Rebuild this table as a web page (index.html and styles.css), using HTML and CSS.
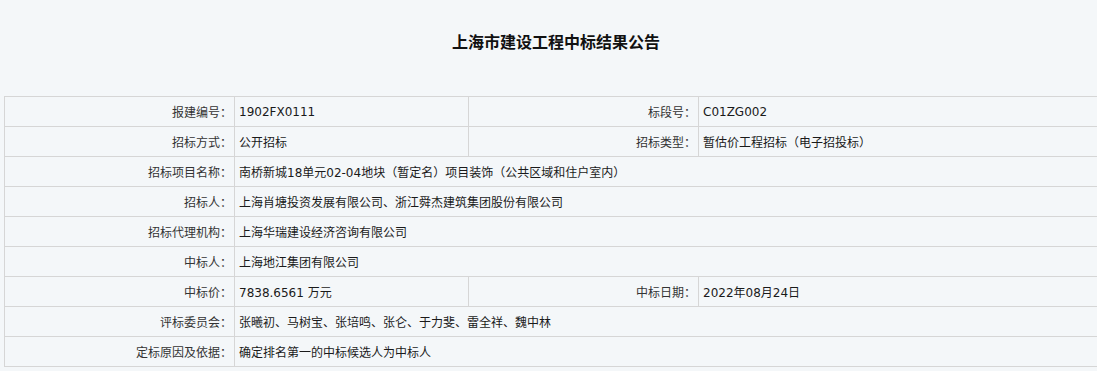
FILE: index.html
```html
<!DOCTYPE html>
<html lang="zh-CN">
<head>
<meta charset="utf-8">
<title>上海市建设工程中标结果公告</title>
<link rel="stylesheet" href="styles.css">
</head>
<body>
<div class="page">
  <h1 class="title">上海市建设工程中标结果公告</h1>
  <table class="info">
    <colgroup>
      <col class="c-label">
      <col class="c-value">
      <col class="c-label">
      <col class="c-value-wide">
    </colgroup>
    <tr>
      <th>报建编号：</th><td>1902FX0111</td>
      <th>标段号：</th><td>C01ZG002</td>
    </tr>
    <tr>
      <th>招标方式：</th><td>公开招标</td>
      <th>招标类型：</th><td>暂估价工程招标（电子招投标）</td>
    </tr>
    <tr>
      <th>招标项目名称：</th><td colspan="3">南桥新城18单元02-04地块（暂定名）项目装饰（公共区域和住户室内）</td>
    </tr>
    <tr>
      <th>招标人：</th><td colspan="3">上海肖塘投资发展有限公司、浙江舜杰建筑集团股份有限公司</td>
    </tr>
    <tr>
      <th>招标代理机构：</th><td colspan="3">上海华瑞建设经济咨询有限公司</td>
    </tr>
    <tr>
      <th>中标人：</th><td colspan="3">上海地江集团有限公司</td>
    </tr>
    <tr>
      <th>中标价：</th><td>7838.6561 万元</td>
      <th>中标日期：</th><td>2022年08月24日</td>
    </tr>
    <tr>
      <th>评标委员会：</th><td colspan="3">张曦初、马树宝、张培鸣、张仑、于力斐、雷全祥、魏中林</td>
    </tr>
    <tr>
      <th>定标原因及依据：</th><td colspan="3">确定排名第一的中标候选人为中标人</td>
    </tr>
  </table>
</div>
</body>
</html>
```
FILE: styles.css
```css
html, body {
  margin: 0;
  padding: 0;
  background: #f4f7f9;
  overflow: hidden;
}
body {
  font-family: "DejaVu Sans", "Noto Sans CJK SC", sans-serif;
  font-size: 12px;
  color: #222;
}
.page {
  width: 1104px;
  margin-left: 4px;
}
.title {
  margin: 0;
  padding-top: 29px;
  height: 24px;
  line-height: 24px;
  margin-bottom: 43px;
  text-align: center;
  font-family: "Noto Sans CJK SC", sans-serif;
  font-size: 16px;
  font-weight: bold;
  color: #111;
}
.info {
  width: 1104px;
  table-layout: fixed;
  border-collapse: collapse;
}
.c-label { width: 230px; }
.c-value { width: 234px; }
.c-value-wide { width: 410px; }
.info th,
.info td {
  border: 1px solid #d6d6d6;
  height: 29px;
  padding: 0;
  vertical-align: middle;
  white-space: nowrap;
}
.info th {
  text-align: right;
  font-weight: normal;
  color: #333;
  padding-right: 2px;
}
.info td {
  text-align: left;
  padding-left: 4px;
  color: #1a1a1a;
}
```
